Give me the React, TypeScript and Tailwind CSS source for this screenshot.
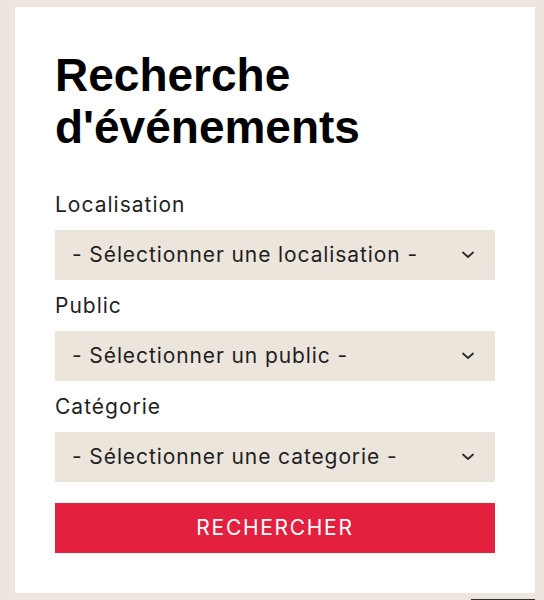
import React from 'react';

const fields = [
    { label: 'Localisation', placeholder: '- Sélectionner une localisation -' },
    { label: 'Public', placeholder: '- Sélectionner un public -' },
    { label: 'Catégorie', placeholder: '- Sélectionner une categorie -' },
];

const Chevron = () => (
    <svg width="14" height="8" viewBox="0 0 14 8" fill="none" className="shrink-0">
        <path d="M2 1.5 L7 6 L12 1.5" stroke="#2b2b2b" strokeWidth="1.8" strokeLinecap="round" strokeLinejoin="round" />
    </svg>
);

const SelectField = ({ label, placeholder }: { label: string; placeholder: string }) => {
    return (
        <div>
            <label className="block h-[51px] leading-[51px] text-[21px] tracking-[1px] text-[#1f1f1f]">{label}</label>
            <div className="flex h-[50px] items-center justify-between bg-[#ece5dc] pl-[17px] pr-[20px] text-[21px] tracking-[0.9px] text-[#1f1f1f]">
                <span>{placeholder}</span>
                <Chevron />
            </div>
        </div>
    );
};

export default function App() {
    return (
        <div className="min-h-[600px] bg-[#ece6de] pt-[7px] pl-[15px] pr-[9px]">
            <div className="bg-white px-[40px] pt-[42px] pb-[40px] font-['Inter','Noto_Sans',sans-serif]">
                <h1 className="mb-[26px] font-['Liberation_Sans',Arial,sans-serif] text-[46px] font-bold leading-[52px] text-black">
                    Recherche
                    <br />
                    d'événements
                </h1>
                {fields.map((f) => (
                    <SelectField key={f.label} label={f.label} placeholder={f.placeholder} />
                ))}
                <button className="mt-[21px] flex h-[50px] w-full items-center justify-center bg-[#e3213f] text-[21px] tracking-[1.7px] text-white">
                    RECHERCHER
                </button>
            </div>
            <div className="mt-[6px] ml-auto h-[2px] w-[64px] bg-[#2f2f2f]" />
        </div>
    );
}
